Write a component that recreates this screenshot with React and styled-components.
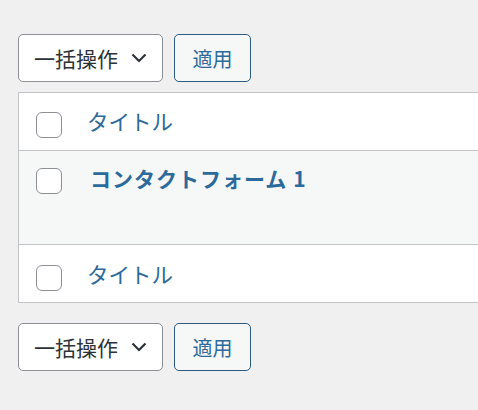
import React from "react";
import styled, { createGlobalStyle } from "styled-components";

const Global = createGlobalStyle`
  html, body { margin: 0; padding: 0; background: #f0f0f1; }
  body { font-family: "Noto Sans CJK JP", "Noto Sans", sans-serif; }
`;

const Page = styled.div`
  padding: 34px 0 0 18px;
`;

const Toolbar = styled.div`
  display: flex;
  gap: 11px;
  height: 48px;
  margin-bottom: ${(p) => p.$mb || 0}px;
`;

const Select = styled.div`
  box-sizing: border-box;
  width: 145px;
  height: 48px;
  border: 1.5px solid #8c8f94;
  border-radius: 5px;
  background: #fff;
  display: flex;
  align-items: center;
  padding-left: 15px;
  gap: 13px;
  color: #2c3338;
  font-size: 21px;
`;

const Button = styled.div`
  box-sizing: border-box;
  width: 77px;
  height: 48px;
  border: 1.5px solid #2b5b80;
  border-radius: 5px;
  background: #f6f7f7;
  display: flex;
  align-items: center;
  justify-content: center;
  color: #2c6a9b;
  font-size: 20px;
`;

const Table = styled.div`
  box-sizing: border-box;
  border: 1.5px solid #c3c4c7;
  border-right: none;
  background: #fff;
  margin-bottom: 20px;
`;

const Row = styled.div`
  box-sizing: border-box;
  display: flex;
  align-items: flex-start;
  height: ${(p) => p.$h}px;
  padding-top: ${(p) => p.$pt}px;
  padding-left: 17px;
  background: ${(p) => (p.$alt ? "#f6f7f7" : "#fff")};
  border-top: ${(p) => (p.$first ? "none" : "1.5px solid #c3c4c7")};
`;

const Check = styled.div`
  box-sizing: border-box;
  width: 26px;
  height: 26px;
  border: 1.5px solid #8c8f94;
  border-radius: 6px;
  background: #fff;
  flex-shrink: 0;
`;

const Title = styled.span`
  margin-left: ${(p) => (p.$bold ? 28 : 25)}px;
  margin-top: ${(p) => (p.$bold ? -5 : -6)}px;
  color: #2c6a9b;
  font-size: ${(p) => (p.$bold ? 21 : 21.5)}px;
  font-weight: ${(p) => (p.$bold ? 700 : 400)};
  line-height: 30px;
  letter-spacing: ${(p) => (p.$bold ? "1px" : "0")};
`;

const Chevron = () => (
  <svg width="16" height="10" viewBox="0 0 16 10" fill="none">
    <path d="M1.5 1.5 L8 8 L14.5 1.5" stroke="#2c3338" strokeWidth="2.2" />
  </svg>
);

const Actions = ({ mb }) => (
  <Toolbar $mb={mb}>
    <Select>
      <span>一括操作</span>
      <Chevron />
    </Select>
    <Button>適用</Button>
  </Toolbar>
);

export default function App() {
  return (
    <Page>
      <Global />
      <Actions mb={10} />
      <Table>
        <Row $first $h={57} $pt={19}>
          <Check />
          <Title>タイトル</Title>
        </Row>
        <Row $alt $h={94} $pt={17}>
          <Check />
          <Title $bold>コンタクトフォーム 1</Title>
        </Row>
        <Row $h={58} $pt={20}>
          <Check />
          <Title>タイトル</Title>
        </Row>
      </Table>
      <Actions />
    </Page>
  );
}
